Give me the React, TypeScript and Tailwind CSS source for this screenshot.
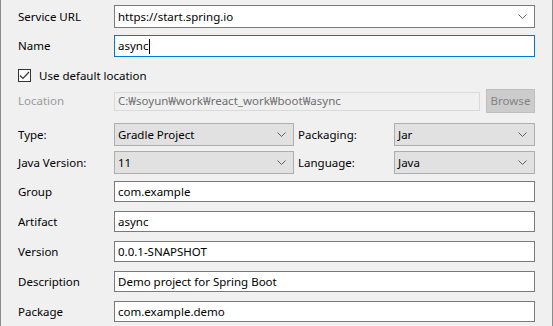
import type { ReactNode } from "react";

function Chevron() {
  return (
    <svg width="9" height="6" viewBox="0 0 9 6" className="shrink-0">
      <path d="M0.5 0.5 L4.5 4.5 L8.5 0.5" fill="none" stroke="#606060" strokeWidth="1" />
    </svg>
  );
}

function Label({ children, className = "" }: { children: ReactNode; className?: string }) {
  return <div className={`w-[96px] shrink-0 text-black ${className}`}>{children}</div>;
}

function TextField({ value }: { value: string }) {
  return (
    <div className="flex h-[21px] flex-1 items-center border border-[#7a7a7a] bg-white pl-[3px] text-black">
      {value}
    </div>
  );
}

function GraySelect({ value, className = "" }: { value: string; className?: string }) {
  return (
    <div
      className={`flex h-[23px] items-center justify-between border border-[#adadad] bg-[#e1e1e1] pl-[3px] pr-[7px] text-black ${className}`}
    >
      <span>{value}</span>
      <Chevron />
    </div>
  );
}

export default function App() {
  const fields = [
    { label: "Group", value: "com.example", mt: "mt-[7px]" },
    { label: "Artifact", value: "async", mt: "mt-[9px]" },
    { label: "Version", value: "0.0.1-SNAPSHOT", mt: "mt-[9px]" },
    { label: "Description", value: "Demo project for Spring Boot", mt: "mt-[9px]" },
    { label: "Package", value: "com.example.demo", mt: "mt-[9px]" },
  ];

  return (
    <div
      className="h-[326px] w-[553px] overflow-hidden border-l border-r border-l-[#8a8a8a] border-r-[#8a8a8a] bg-[#f0f0f0] pl-[17px] pr-[17px] text-[11.5px] leading-none"
      style={{ fontFamily: '"Noto Sans", "Open Sans", sans-serif' }}
    >
      {/* Service URL */}
      <div className="mt-[5px] flex items-center">
        <Label>Service URL</Label>
        <div className="flex h-[23px] flex-1 items-center justify-between border border-[#7a7a7a] bg-white pl-[3px] pr-[7px] text-black">
          <span>https://start.spring.io</span>
          <Chevron />
        </div>
      </div>

      {/* Name */}
      <div className="mt-[7px] flex items-center">
        <Label>Name</Label>
        <div className="flex h-[22px] flex-1 items-center border border-[#0078d7] bg-white pl-[3px] text-black">
          async
          <span className="ml-px inline-block h-[15px] w-px bg-black" />
        </div>
      </div>

      {/* Use default location */}
      <div className="mt-[12px] flex items-center">
        <div className="flex h-[13px] w-[13px] items-center justify-center border border-[#333333] bg-white">
          <svg width="11" height="9" viewBox="0 0 11 9">
            <path d="M1 4.5 L4 7.5 L10 1" fill="none" stroke="#333333" strokeWidth="1.2" />
          </svg>
        </div>
        <span className="ml-[8px] text-black">Use default location</span>
      </div>

      {/* Location */}
      <div className="mt-[7px] flex items-center">
        <Label className="!text-[#9a9a9a]">Location</Label>
        <div className="flex h-[19px] flex-1 items-center border border-[#d9d9d9] bg-[#f0f0f0] pl-[3px] text-[#6d6d6d]">
          C:₩soyun₩work₩react_work₩boot₩async
        </div>
        <div className="ml-[6px] flex h-[24px] w-[49px] items-center justify-center border border-[#bfbfbf] bg-[#cccccc] text-[#838383]">
          Browse
        </div>
      </div>

      {/* Type / Packaging */}
      <div className="mt-[10px] flex items-center">
        <Label>Type:</Label>
        <GraySelect value="Gradle Project" className="w-[180px]" />
        <div className="ml-[4px] w-[96px] text-black">Packaging:</div>
        <GraySelect value="Jar" className="flex-1" />
      </div>

      {/* Java Version / Language */}
      <div className="mt-[5px] flex items-center">
        <Label>Java Version:</Label>
        <GraySelect value="11" className="w-[180px]" />
        <div className="ml-[4px] w-[96px] text-black">Language:</div>
        <GraySelect value="Java" className="flex-1" />
      </div>

      {fields.map((f) => (
        <div key={f.label} className={`${f.mt} flex items-center`}>
          <Label>{f.label}</Label>
          <TextField value={f.value} />
        </div>
      ))}
    </div>
  );
}
